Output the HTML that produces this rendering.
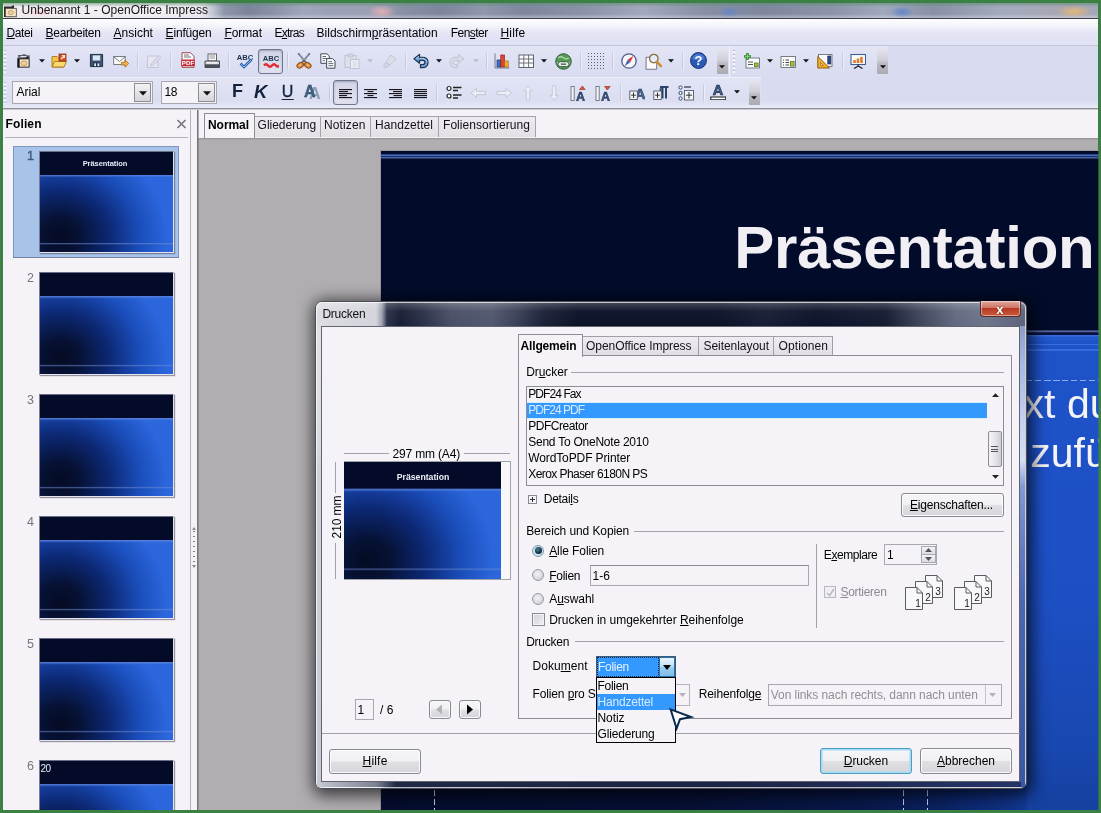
<!DOCTYPE html>
<html lang="de">
<head>
<meta charset="utf-8">
<title>Unbenannt 1 - OpenOffice Impress</title>
<style>
*{box-sizing:border-box;margin:0;padding:0}
html,body{width:1101px;height:813px;overflow:hidden}
body{background:#3b8143;font-family:"Liberation Sans",sans-serif;font-size:12px;color:#000;position:relative}
#win{position:absolute;left:0;top:0;width:1101px;height:813px;overflow:hidden;will-change:transform}
#win div,#win span,#win svg{position:absolute}
#win u{text-decoration:underline;text-underline-offset:.6px;text-decoration-thickness:1px}
span.t{white-space:pre;display:block}
</style>
</head>
<body>
<div id="win">
<div style="left:3px;top:3px;width:1095px;height:15px;background:linear-gradient(90deg,#f0edf1 0,#f3eff3 150px,#eae8ee 198px,#c0c4d2 210px,#8e96ac 221px,#7c849c 245px,#8a92a8 270px,#a0a7bc 300px,#9aa1b7 330px,#9c9fb4 378px,#8890a6 400px,#7e869e 440px,#8f97ad 480px,#7f879f 520px,#8a92a8 580px,#a2a9be 640px,#8890a6 700px,#7f879f 760px,#8c94aa 830px,#a0a8be 880px,#8890a6 930px,#a4abbf 1000px,#a9a6b4 1060px,#a3a8b8 1095px)"></div>
<div style="left:3px;top:3px;width:1095px;height:4px;background:linear-gradient(rgba(90,140,110,.6),rgba(150,170,180,0))"></div>
<div style="left:3px;top:14px;width:1095px;height:4px;background:linear-gradient(rgba(255,255,255,0),rgba(230,232,240,.45))"></div>
<div style="left:1056px;top:5px;width:36px;height:13px;background:radial-gradient(ellipse at center,rgba(236,186,110,.85),rgba(236,190,120,0) 70%)"></div>
<div style="left:368px;top:5px;width:28px;height:13px;background:radial-gradient(ellipse at center,rgba(245,180,180,.8),rgba(240,190,190,0) 70%)"></div>
<div style="left:25px;top:7px;width:30px;height:11px;background:radial-gradient(ellipse at center,rgba(250,200,200,.55),rgba(240,190,190,0) 70%)"></div>
<div style="left:718px;top:6px;width:22px;height:12px;background:radial-gradient(ellipse at center,rgba(90,130,205,.7),rgba(90,130,205,0) 70%)"></div>
<div style="left:890px;top:6px;width:24px;height:12px;background:radial-gradient(ellipse at center,rgba(80,125,210,.75),rgba(90,130,205,0) 70%)"></div>
<div style="left:3px;top:18px;width:1095px;height:1px;background:#3c3d48"></div>
<span class="t" style="left:21.60px;top:2.84px;font-size:12px;line-height:14px;color:#1a1418;letter-spacing:0.016px;">Unbenannt 1 - OpenOffice Impress</span>
<div style="left:3px;top:19px;width:1095px;height:27px;background:linear-gradient(#fdfdfe 0,#f6f6fb 6px,#e9eaf7 11px,#e2e4f5 16px,#e0e2f4 27px)"></div>
<span class="t" style="left:6.40px;top:26.24px;font-size:12px;line-height:14px;color:#000;letter-spacing:-0.363px;"><u>D</u>atei</span>
<span class="t" style="left:45.60px;top:26.24px;font-size:12px;line-height:14px;color:#000;letter-spacing:-0.305px;"><u>B</u>earbeiten</span>
<span class="t" style="left:113.40px;top:26.24px;font-size:12px;line-height:14px;color:#000;letter-spacing:0.034px;"><u>A</u>nsicht</span>
<span class="t" style="left:165.60px;top:26.24px;font-size:12px;line-height:14px;color:#000;letter-spacing:-0.172px;"><u>E</u>infügen</span>
<span class="t" style="left:224.40px;top:26.24px;font-size:12px;line-height:14px;color:#000;letter-spacing:-0.069px;"><u>F</u>ormat</span>
<span class="t" style="left:274.50px;top:26.24px;font-size:12px;line-height:14px;color:#000;letter-spacing:-0.753px;">E<u>x</u>tras</span>
<span class="t" style="left:316.60px;top:26.24px;font-size:12px;line-height:14px;color:#000;letter-spacing:-0.018px;">Bildschirm<u>p</u>räsentation</span>
<span class="t" style="left:450.70px;top:26.24px;font-size:12px;line-height:14px;color:#000;letter-spacing:-0.527px;">Fen<u>s</u>ter</span>
<span class="t" style="left:500.40px;top:26.24px;font-size:12px;line-height:14px;color:#000;letter-spacing:0.197px;"><u>H</u>ilfe</span>
<div style="left:3px;top:45px;width:1095px;height:64px;background:#d9dcf0"></div>
<div style="left:3px;top:45px;width:1095px;height:1px;background:#c3c6d8"></div>
<div style="left:3px;top:46px;width:885px;height:31px;background:linear-gradient(#e3e5f6,#dcdff2 60%,#d9dcf0)"></div>
<div style="left:3px;top:77px;width:758px;height:31px;background:linear-gradient(#e3e5f6,#dcdff2 60%,#d9dcf0)"></div>
<div style="left:3px;top:77px;width:758px;height:1px;background:#eceefa"></div>
<div style="left:3px;top:101px;width:1095px;height:7px;background:linear-gradient(rgba(236,237,248,0),rgba(236,237,248,.9))"></div>
<div style="left:3px;top:108px;width:1095px;height:1px;background:#8d8d96"></div>
<div style="left:3px;top:109px;width:1095px;height:1px;background:#cfcdd3"></div>
<div style="left:12px;top:81px;width:141px;height:23px;background:#f5f3f7;border:1px solid #a9a8b2"></div>
<div style="left:134px;top:83px;width:17px;height:19px;background:linear-gradient(#f2f1f4,#d6d5da);border:1px solid #8e8d96"></div>
<span class="t" style="left:16.40px;top:85.44px;font-size:12px;line-height:14px;color:#000;">Arial</span>
<div style="left:161px;top:81px;width:56px;height:23px;background:#f5f3f7;border:1px solid #a9a8b2"></div>
<div style="left:198px;top:83px;width:17px;height:19px;background:linear-gradient(#f2f1f4,#d6d5da);border:1px solid #8e8d96"></div>
<span class="t" style="left:164.40px;top:85.44px;font-size:12px;line-height:14px;color:#000;letter-spacing:-0.430px;">18</span>
<div style="left:3.7px;top:50px;width:2px;height:24px;background:repeating-linear-gradient(#b4b7cb 0,#b4b7cb 1.3px,rgba(250,250,255,.9) 1.3px,rgba(250,250,255,.9) 2.6px,rgba(0,0,0,0) 2.6px,rgba(0,0,0,0) 4px)"></div>
<div style="left:3.7px;top:82px;width:2px;height:22px;background:repeating-linear-gradient(#b4b7cb 0,#b4b7cb 1.3px,rgba(250,250,255,.9) 1.3px,rgba(250,250,255,.9) 2.6px,rgba(0,0,0,0) 2.6px,rgba(0,0,0,0) 4px)"></div>
<svg style="left:16px;top:52.5px;" width="16" height="16" viewBox="0 0 16 16"><path d="M1.5 4.5 H9 L13.5 2 V14.5 H1.5Z" fill="#2a2a2e"/><rect x="3" y="6" width="10" height="8" fill="#f3e3c8" stroke="#4a4036" stroke-width=".8"/><ellipse cx="8" cy="10.3" rx="3" ry="2.3" fill="#f1cf9a" stroke="#b98d52" stroke-width=".7"/><path d="M2 2.5 H10 M2 4 L8 1.5 L13 3.5" stroke="#5a5a62" stroke-width="1" fill="none"/><rect x="1.5" y="6" width="2" height="8.5" fill="#15151a"/></svg>
<svg style="left:38.5px;top:59.0px;" width="6" height="4" viewBox="0 0 6 4"><path d="M0 0.2 H6 L3 3.4Z" fill="#111"/></svg>
<svg style="left:51px;top:52.5px;" width="16" height="16" viewBox="0 0 16 16"><path d="M1 3.5 H6 L7.5 5 H13 V14 H1Z" fill="#f4c648" stroke="#a9751c" stroke-width=".9"/><path d="M1 14 L3.5 8.5 H15.5 L13 14Z" fill="#f9da6e" stroke="#a9751c" stroke-width=".9"/><rect x="8" y="1" width="7" height="7" fill="#d5532b" stroke="#8a2a12" stroke-width=".8"/><path d="M10 6 L13.5 2.5 M11 2.5 H13.5 V5" stroke="#ffe9c8" stroke-width="1.2" fill="none"/></svg>
<svg style="left:74.3px;top:59.0px;" width="6" height="4" viewBox="0 0 6 4"><path d="M0 0.2 H6 L3 3.4Z" fill="#111"/></svg>
<svg style="left:88.5px;top:53px;" width="15" height="15" viewBox="0 0 16 16"><path d="M1.5 1.5 H14.5 V14.5 H1.5Z" fill="#3d5573" stroke="#1d2c44" stroke-width="1"/><rect x="4" y="2.5" width="8" height="5.5" fill="#d9e6f4"/><rect x="4.5" y="10" width="7" height="4.5" fill="#1d2c44"/><rect x="5.5" y="11" width="2" height="3" fill="#d9e6f4"/><rect x="9" y="11" width="2" height="3" fill="#d9e6f4"/></svg>
<svg style="left:113px;top:53px;" width="16" height="16" viewBox="0 0 16 16"><rect x=".7" y="3.5" width="11.5" height="8" fill="#fbfbf6" stroke="#6b7080" stroke-width=".9"/><path d="M1 4 L6.5 8.5 L12 4" fill="none" stroke="#6b7080" stroke-width=".9"/><path d="M8.5 9.3 H12 V7 L15.7 10.6 L12 14.2 V12 H8.5Z" fill="#f3b24a" stroke="#a86514" stroke-width=".8"/></svg>
<div style="left:136.5px;top:50px;width:1px;height:22px;background:linear-gradient(rgba(170,174,196,0),#c6c9dc 25%,#c6c9dc 75%,rgba(170,174,196,0))"></div>
<div style="left:137.5px;top:50px;width:1px;height:22px;background:linear-gradient(rgba(255,255,255,0),rgba(240,241,250,.8) 25%,rgba(240,241,250,.8) 75%,rgba(255,255,255,0))"></div>
<svg style="left:146px;top:52.5px;" width="16" height="16" viewBox="0 0 16 16"><rect x="1.5" y="3" width="10.5" height="11.5" fill="#e6e7f2" stroke="#c3c5d6" stroke-width="1"/><path d="M5 11 L13 2.5 L15 4.5 L7 12.5 L4.5 13Z" fill="#dcdde9" stroke="#c0c2d3" stroke-width=".9"/></svg>
<div style="left:170px;top:50px;width:1px;height:22px;background:linear-gradient(rgba(170,174,196,0),#c6c9dc 25%,#c6c9dc 75%,rgba(170,174,196,0))"></div>
<div style="left:171px;top:50px;width:1px;height:22px;background:linear-gradient(rgba(255,255,255,0),rgba(240,241,250,.8) 25%,rgba(240,241,250,.8) 75%,rgba(255,255,255,0))"></div>
<svg style="left:180px;top:52px;" width="16" height="16" viewBox="0 0 16 16"><path d="M2 .7 H10.5 L14 4.2 V15.3 H2Z" fill="#fbfbfb" stroke="#8f3a3a" stroke-width=".9"/><path d="M4 3 H9 M4 5 H11" stroke="#777" stroke-width="1"/><rect x="1.2" y="7.5" width="13.6" height="6.8" rx="1" fill="#c62f3a"/><text x="8" y="13.3" text-anchor="middle" font-family="Liberation Sans,sans-serif" font-weight="bold" font-size="6.2" fill="#fff">PDF</text></svg>
<svg style="left:204px;top:52.5px;" width="16" height="16" viewBox="0 0 16 16"><rect x="4" y="1" width="8.5" height="7" fill="#fcfcfc" stroke="#555" stroke-width=".9"/><path d="M5.5 3 H11 M5.5 5 H11" stroke="#888" stroke-width=".9"/><path d="M1 8 H15.5 V14.5 H1Z" fill="#d8d9dc" stroke="#3a3c42" stroke-width=".9"/><rect x="1" y="11.3" width="14.5" height="3.2" fill="#4a4d55"/><rect x="3" y="9.3" width="10" height="1.2" fill="#f5f5f5"/></svg>
<div style="left:228px;top:50px;width:1px;height:22px;background:linear-gradient(rgba(170,174,196,0),#c6c9dc 25%,#c6c9dc 75%,rgba(170,174,196,0))"></div>
<div style="left:229px;top:50px;width:1px;height:22px;background:linear-gradient(rgba(255,255,255,0),rgba(240,241,250,.8) 25%,rgba(240,241,250,.8) 75%,rgba(255,255,255,0))"></div>
<svg style="left:237px;top:52.5px;" width="16" height="16" viewBox="0 0 16 16"><text x="8" y="7.3" text-anchor="middle" font-family="Liberation Sans,sans-serif" font-weight="bold" font-size="7.6" fill="#1f3350">ABC</text><path d="M3.5 10.5 L7 14 L14.5 6.5" fill="none" stroke="#2a5fae" stroke-width="2.6"/><path d="M3.5 10.5 L7 14 L14.5 6.5" fill="none" stroke="#8db8ee" stroke-width="1"/></svg>
<div style="left:258px;top:49px;width:25px;height:25px;border:1px solid #6f7890;border-radius:3px;background:linear-gradient(#d2d5e6,#dfe1f0);box-shadow:inset 0 1px 2px rgba(60,70,100,.35)"></div>
<svg style="left:262.5px;top:53px;" width="16" height="16" viewBox="0 0 16 16"><text x="8" y="8" text-anchor="middle" font-family="Liberation Sans,sans-serif" font-weight="bold" font-size="7.6" fill="#1f3350">ABC</text><path d="M1 12.5 Q3 10 5 12.5 T9 12.5 T13 12.5 T16 12" fill="none" stroke="#e3282e" stroke-width="2.3"/></svg>
<div style="left:287px;top:50px;width:1px;height:22px;background:linear-gradient(rgba(170,174,196,0),#c6c9dc 25%,#c6c9dc 75%,rgba(170,174,196,0))"></div>
<div style="left:288px;top:50px;width:1px;height:22px;background:linear-gradient(rgba(255,255,255,0),rgba(240,241,250,.8) 25%,rgba(240,241,250,.8) 75%,rgba(255,255,255,0))"></div>
<svg style="left:295.5px;top:52.5px;" width="16" height="16" viewBox="0 0 16 16"><path d="M2.6 .8 L11.2 11 M13.4 .8 L4.8 11" stroke="#56607a" stroke-width="1.7" fill="none" stroke-linecap="round"/><path d="M3.4 1.6 L8 7 M12.6 1.6 L8 7" stroke="#c9cfdc" stroke-width=".6" fill="none"/><ellipse cx="4.2" cy="12.2" rx="3.5" ry="2.5" transform="rotate(-32 4.2 12.2)" fill="#d98c3c" stroke="#8a4c12" stroke-width="1"/><ellipse cx="11.8" cy="12.2" rx="3.5" ry="2.5" transform="rotate(32 11.8 12.2)" fill="#d98c3c" stroke="#8a4c12" stroke-width="1"/><ellipse cx="4.2" cy="12.2" rx="1.3" ry=".8" transform="rotate(-32 4.2 12.2)" fill="#f3c58c"/><ellipse cx="11.8" cy="12.2" rx="1.3" ry=".8" transform="rotate(32 11.8 12.2)" fill="#f3c58c"/></svg>
<svg style="left:320px;top:52.5px;" width="16" height="16" viewBox="0 0 16 16"><path d="M.8 .8 H7 L9.3 3 V10.3 H.8Z" fill="#fcfcfd" stroke="#3f4a5c" stroke-width="1"/><path d="M2.5 3.5 H6 M2.5 5.5 H7.5 M2.5 7.7 H5" stroke="#3f4a5c" stroke-width=".8"/><path d="M6.6 5.6 H12.6 L15 7.9 V15.2 H6.6Z" fill="#fcfcfd" stroke="#3f4a5c" stroke-width="1"/><path d="M8.4 8.6 H12 M8.4 10.6 H13.3 M8.4 12.7 H13.3" stroke="#3f4a5c" stroke-width=".8"/></svg>
<svg style="left:344px;top:52.5px;" width="16" height="16" viewBox="0 0 16 16"><rect x="1" y="2.5" width="11" height="12" fill="#dfe0ec" stroke="#c0c2d3" stroke-width="1"/><rect x="4" y="1" width="5" height="3" fill="#d2d3e1" stroke="#c0c2d3" stroke-width=".8"/><rect x="6.5" y="6.5" width="8.5" height="9" fill="#eceef6" stroke="#c0c2d3" stroke-width="1"/><path d="M8.5 9 H13 M8.5 11 H13 M8.5 13 H13" stroke="#cfd1df" stroke-width=".9"/></svg>
<svg style="left:367px;top:59.0px;" width="6" height="4" viewBox="0 0 6 4"><path d="M0 0.2 H6 L3 3.4Z" fill="#b9bbcc"/></svg>
<svg style="left:382px;top:52.5px;" width="16" height="16" viewBox="0 0 16 16"><path d="M9 2 L14 6 L8 12 L4 9Z" fill="#dcdde9" stroke="#c3c5d6" stroke-width="1"/><path d="M4 9 L7.5 12.5 L3 15 L1.5 13Z" fill="#d3d4e2" stroke="#c3c5d6" stroke-width="1"/></svg>
<div style="left:405px;top:50px;width:1px;height:22px;background:linear-gradient(rgba(170,174,196,0),#c6c9dc 25%,#c6c9dc 75%,rgba(170,174,196,0))"></div>
<div style="left:406px;top:50px;width:1px;height:22px;background:linear-gradient(rgba(255,255,255,0),rgba(240,241,250,.8) 25%,rgba(240,241,250,.8) 75%,rgba(255,255,255,0))"></div>
<svg style="left:413px;top:52.5px;" width="16" height="16" viewBox="0 0 16 16"><path d="M6.5 1.5 V4.3 H9.5 C13 4.3 15 6.6 15 9.5 C15 12.6 12.8 14.7 9.5 14.7 H7.5 V11.6 H9.5 C11 11.6 12 10.8 12 9.5 C12 8.2 11 7.4 9.5 7.4 H6.5 V10.2 L1 5.8Z" fill="#7aa3d6" stroke="#1c3558" stroke-width="1.3" stroke-linejoin="round"/><path d="M6 3.2 L2.6 5.8 M7 5.3 H10 C12.5 5.3 14 7.3 14 9.5" stroke="#b9d4f4" stroke-width=".8" fill="none"/></svg>
<svg style="left:436.4px;top:59.0px;" width="6" height="4" viewBox="0 0 6 4"><path d="M0 0.2 H6 L3 3.4Z" fill="#111"/></svg>
<svg style="left:449px;top:52.5px;" width="16" height="16" viewBox="0 0 16 16"><path d="M9.5 1.5 V4.3 H6.5 C3 4.3 1 6.6 1 9.5 C1 12.6 3.2 14.7 6.5 14.7 H8.5 V11.6 H6.5 C5 11.6 4 10.8 4 9.5 C4 8.2 5 7.4 6.5 7.4 H9.5 V10.2 L15 5.8Z" fill="#dadbe8" stroke="#c0c2d3" stroke-width="1" stroke-linejoin="round"/></svg>
<svg style="left:472.6px;top:59.0px;" width="6" height="4" viewBox="0 0 6 4"><path d="M0 0.2 H6 L3 3.4Z" fill="#b9bbcc"/></svg>
<div style="left:485.5px;top:50px;width:1px;height:22px;background:linear-gradient(rgba(170,174,196,0),#c6c9dc 25%,#c6c9dc 75%,rgba(170,174,196,0))"></div>
<div style="left:486.5px;top:50px;width:1px;height:22px;background:linear-gradient(rgba(255,255,255,0),rgba(240,241,250,.8) 25%,rgba(240,241,250,.8) 75%,rgba(255,255,255,0))"></div>
<svg style="left:494px;top:52.5px;" width="16" height="16" viewBox="0 0 16 16"><path d="M1 .5 V15 H15.5" fill="none" stroke="#6e7a96" stroke-width="1"/><rect x="3" y="7" width="3.6" height="7" fill="#3d6fc4" stroke="#1d3a78" stroke-width=".7"/><rect x="6.8" y="2" width="3.6" height="12" fill="#e2452f" stroke="#8a1f12" stroke-width=".7"/><rect x="10.6" y="8" width="3.6" height="6" fill="#f3a93a" stroke="#a5660f" stroke-width=".7"/></svg>
<svg style="left:518px;top:52.5px;" width="16" height="16" viewBox="0 0 16 16"><rect x="1" y="2" width="14.5" height="12.5" fill="#fcfcfc" stroke="#62646e" stroke-width="1"/><path d="M1 6 H15.5 M1 10 H15.5 M5.8 2 V14.5 M10.6 2 V14.5" stroke="#62646e" stroke-width=".9"/></svg>
<svg style="left:541.4px;top:59.0px;" width="6" height="4" viewBox="0 0 6 4"><path d="M0 0.2 H6 L3 3.4Z" fill="#111"/></svg>
<svg style="left:555px;top:52.5px;" width="17" height="17" viewBox="0 0 16 16"><circle cx="8" cy="8" r="7.3" fill="#5a9a58" stroke="#2d5a34" stroke-width=".9"/><path d="M3 4.5 Q5.5 2.5 8 4.5 T13 4.5 M2 9 Q4 11 6 9 M10 9 Q12 11 14 9" stroke="#a9d6a0" stroke-width="1.4" fill="none"/><rect x="2.8" y="8.2" width="10.4" height="4.6" rx="2.3" fill="#e9f1ea" stroke="#3c5a48" stroke-width=".9"/><path d="M5.5 10.5 H10.5" stroke="#3c5a48" stroke-width="1.2"/></svg>
<div style="left:580px;top:50px;width:1px;height:22px;background:linear-gradient(rgba(170,174,196,0),#c6c9dc 25%,#c6c9dc 75%,rgba(170,174,196,0))"></div>
<div style="left:581px;top:50px;width:1px;height:22px;background:linear-gradient(rgba(255,255,255,0),rgba(240,241,250,.8) 25%,rgba(240,241,250,.8) 75%,rgba(255,255,255,0))"></div>
<div style="left:587px;top:52px;width:18px;height:18px;background-image:radial-gradient(circle,#5d5f6c .65px,rgba(0,0,0,0) .95px);background-size:3px 3px"></div>
<div style="left:612px;top:50px;width:1px;height:22px;background:linear-gradient(rgba(170,174,196,0),#c6c9dc 25%,#c6c9dc 75%,rgba(170,174,196,0))"></div>
<div style="left:613px;top:50px;width:1px;height:22px;background:linear-gradient(rgba(255,255,255,0),rgba(240,241,250,.8) 25%,rgba(240,241,250,.8) 75%,rgba(255,255,255,0))"></div>
<svg style="left:621px;top:52.5px;" width="16" height="16" viewBox="0 0 16 16"><circle cx="8" cy="8" r="7.2" fill="#f6f6fb" stroke="#4d5c8a" stroke-width="1.3"/><path d="M12.5 2.8 L9.3 9.3 L6.7 6.7Z" fill="#e0332b"/><path d="M3.5 13.2 L9.3 9.3 L6.7 6.7Z" fill="#3b62b4"/></svg>
<svg style="left:645px;top:52.5px;" width="17" height="17" viewBox="0 0 16 16"><path d="M1 4 H8 L11 7 V15.3 H1Z" fill="#fbfbfb" stroke="#6b6f7c" stroke-width=".9"/><circle cx="8.3" cy="5.2" r="4" fill="#e4f0fb" fill-opacity=".9" stroke="#8a6a3a" stroke-width="1.2"/><path d="M11.3 8.3 L15 12.3" stroke="#d08a2a" stroke-width="2.3" stroke-linecap="round"/></svg>
<svg style="left:668.4px;top:59.0px;" width="6" height="4" viewBox="0 0 6 4"><path d="M0 0.2 H6 L3 3.4Z" fill="#111"/></svg>
<div style="left:681.5px;top:50px;width:1px;height:22px;background:linear-gradient(rgba(170,174,196,0),#c6c9dc 25%,#c6c9dc 75%,rgba(170,174,196,0))"></div>
<div style="left:682.5px;top:50px;width:1px;height:22px;background:linear-gradient(rgba(255,255,255,0),rgba(240,241,250,.8) 25%,rgba(240,241,250,.8) 75%,rgba(255,255,255,0))"></div>
<svg style="left:689.5px;top:52.3px;" width="17" height="17" viewBox="0 0 17 17"><circle cx="8.5" cy="8.5" r="8" fill="#2b58b4" stroke="#16306e" stroke-width=".9"/><path d="M2.2 7 A6.5 6.5 0 0 1 14.8 7 Q8.5 9.5 2.2 7Z" fill="#5a88dc" fill-opacity=".7"/><text x="8.5" y="13.2" text-anchor="middle" font-family="Liberation Sans,sans-serif" font-weight="bold" font-size="13" fill="#fff">?</text></svg>
<div style="left:716.5px;top:48px;width:11px;height:26px;background:linear-gradient(#e4e5ee 0,#cfd0d8 45%,#b9bac2 60%,#a9aab2 100%);border-radius:1px"></div>
<svg style="left:719.0px;top:65px;" width="6" height="4" viewBox="0 0 6 4"><path d="M0 0.3 H6 L3 3.6Z" fill="#111"/></svg>
<div style="left:728.5px;top:46px;width:1px;height:31px;background:#eef0fb"></div>
<div style="left:733px;top:50px;width:2px;height:24px;background:repeating-linear-gradient(#b4b7cb 0,#b4b7cb 1.3px,rgba(250,250,255,.9) 1.3px,rgba(250,250,255,.9) 2.6px,rgba(0,0,0,0) 2.6px,rgba(0,0,0,0) 4px)"></div>
<svg style="left:744px;top:52.5px;" width="16" height="16" viewBox="0 0 16 16"><rect x="2" y="5" width="13.5" height="10" fill="#fbfbfb" stroke="#6b6f7c" stroke-width=".9"/><path d="M4 9 H9 M4 11.5 H9" stroke="#555" stroke-width="1"/><rect x="10.5" y="10" width="3.6" height="3.6" fill="#9fc04a" stroke="#5a7a1c" stroke-width=".8"/><path d="M3.5 0 V7 M0 3.5 H7" stroke="#2f8a2a" stroke-width="2.6"/><path d="M3.5 .8 V6.2 M.8 3.5 H6.2" stroke="#8fd47a" stroke-width=".9"/></svg>
<svg style="left:767.4px;top:59.0px;" width="6" height="4" viewBox="0 0 6 4"><path d="M0 0.2 H6 L3 3.4Z" fill="#111"/></svg>
<svg style="left:780.4px;top:52.5px;" width="16" height="16" viewBox="0 0 16 16"><rect x="1" y="3.5" width="14.5" height="11" fill="#fbfbfb" stroke="#6b6f7c" stroke-width=".9"/><path d="M3 7 H4 M5.5 7 H9 M3 9.5 H4 M5.5 9.5 H9 M3 12 H4 M5.5 12 H9" stroke="#444" stroke-width="1"/><rect x="10.5" y="8.5" width="3.6" height="4.6" fill="#9fc04a" stroke="#5a7a1c" stroke-width=".8"/></svg>
<svg style="left:803.4px;top:59.0px;" width="6" height="4" viewBox="0 0 6 4"><path d="M0 0.2 H6 L3 3.4Z" fill="#111"/></svg>
<svg style="left:817px;top:52.5px;" width="16" height="16" viewBox="0 0 16 16"><rect x="1.5" y="1.5" width="13.5" height="12" fill="#fbfbfb" stroke="#6b6f7c" stroke-width=".9"/><path d="M.8 3.5 L12.5 15 H.8Z" fill="#f2b02e" stroke="#8a5a0c" stroke-width="1"/><path d="M3.5 9.5 L6.5 12.5 H3.5Z" fill="#fbe6a6" stroke="#8a5a0c" stroke-width=".6"/><rect x="10.8" y="3" width="3" height="8" fill="#2d4d8a" stroke="#16284e" stroke-width=".7"/></svg>
<div style="left:841.5px;top:50px;width:1px;height:22px;background:linear-gradient(rgba(170,174,196,0),#c6c9dc 25%,#c6c9dc 75%,rgba(170,174,196,0))"></div>
<div style="left:842.5px;top:50px;width:1px;height:22px;background:linear-gradient(rgba(255,255,255,0),rgba(240,241,250,.8) 25%,rgba(240,241,250,.8) 75%,rgba(255,255,255,0))"></div>
<svg style="left:850px;top:52.5px;" width="16" height="16" viewBox="0 0 16 16"><rect x="1" y="1.5" width="14.5" height="10" fill="#fbfbfb" stroke="#3f5f9a" stroke-width="1.1"/><rect x="3.2" y="7" width="2.6" height="3" fill="#e07a2a"/><rect x="6.7" y="5.5" width="2.6" height="4.5" fill="#e07a2a"/><rect x="10.2" y="3.8" width="2.6" height="6.2" fill="#e07a2a"/><path d="M8.2 11.5 V13 M8.2 13 L4 15.6 M8.2 13 L12.5 15.6" stroke="#2a2a30" stroke-width="1.3" fill="none"/></svg>
<div style="left:877px;top:48px;width:11px;height:26px;background:linear-gradient(#e4e5ee 0,#cfd0d8 45%,#b9bac2 60%,#a9aab2 100%);border-radius:1px"></div>
<svg style="left:879.5px;top:65px;" width="6" height="4" viewBox="0 0 6 4"><path d="M0 0.3 H6 L3 3.6Z" fill="#111"/></svg>
<span class="t" style="left:232.00px;top:81.26px;font-size:18px;line-height:21px;color:#14213d;font-weight:bold;letter-spacing:-1.700px;">F</span>
<span class="t" style="left:254.00px;top:80.59px;font-size:18.5px;line-height:22px;color:#14213d;font-weight:bold;font-style:italic;letter-spacing:2.625px;">K</span>
<span class="t" style="left:281.70px;top:81.96px;font-size:16px;line-height:19px;color:#14213d;letter-spacing:0.438px;-webkit-text-stroke:.35px #14213d;text-decoration:underline;text-underline-offset:1.5px;text-decoration-thickness:1.2px;">U</span>
<span class="t" style="left:309.00px;top:84.46px;font-size:16px;line-height:19px;color:#8d9cb5;font-weight:bold;letter-spacing:-0.562px;">A</span>
<span class="t" style="left:304.00px;top:82.46px;font-size:16px;line-height:19px;color:#3f6487;font-weight:bold;letter-spacing:-0.562px;-webkit-text-stroke:.4px #1e3650;">A</span>
<div style="left:329px;top:82px;width:1px;height:22px;background:linear-gradient(rgba(170,174,196,0),#c6c9dc 25%,#c6c9dc 75%,rgba(170,174,196,0))"></div>
<div style="left:330px;top:82px;width:1px;height:22px;background:linear-gradient(rgba(255,255,255,0),rgba(240,241,250,.8) 25%,rgba(240,241,250,.8) 75%,rgba(255,255,255,0))"></div>
<div style="left:333px;top:80px;width:25px;height:25px;border:1px solid #6f7890;border-radius:3px;background:linear-gradient(#d2d5e6,#dfe1f0);box-shadow:inset 0 1px 2px rgba(60,70,100,.35)"></div>
<svg style="left:338px;top:85.5px;" width="16" height="16" viewBox="0 0 16 16"><rect x="1" y="3" width="13" height="1.15" fill="#16161c"/><rect x="1" y="5" width="9" height="1.15" fill="#16161c"/><rect x="1" y="7" width="13" height="1.15" fill="#16161c"/><rect x="1" y="9" width="8" height="1.15" fill="#16161c"/><rect x="1" y="11" width="13" height="1.15" fill="#16161c"/></svg>
<svg style="left:362.5px;top:85.5px;" width="16" height="16" viewBox="0 0 16 16"><rect x="1" y="3" width="13" height="1.15" fill="#16161c"/><rect x="4.5" y="5" width="6.0" height="1.15" fill="#16161c"/><rect x="1" y="7" width="13" height="1.15" fill="#16161c"/><rect x="4.5" y="9" width="6.0" height="1.15" fill="#16161c"/><rect x="1" y="11" width="13" height="1.15" fill="#16161c"/></svg>
<svg style="left:387.5px;top:85.5px;" width="16" height="16" viewBox="0 0 16 16"><rect x="1" y="3" width="13" height="1.15" fill="#16161c"/><rect x="5" y="5" width="9" height="1.15" fill="#16161c"/><rect x="1" y="7" width="13" height="1.15" fill="#16161c"/><rect x="5.5" y="9" width="8.5" height="1.15" fill="#16161c"/><rect x="1" y="11" width="13" height="1.15" fill="#16161c"/></svg>
<svg style="left:412.5px;top:85.5px;" width="16" height="16" viewBox="0 0 16 16"><rect x="1" y="3" width="13" height="1.15" fill="#16161c"/><rect x="1" y="5" width="13" height="1.15" fill="#16161c"/><rect x="1" y="7" width="13" height="1.15" fill="#16161c"/><rect x="1" y="9" width="13" height="1.15" fill="#16161c"/><rect x="1" y="11" width="13" height="1.15" fill="#16161c"/></svg>
<div style="left:436px;top:82px;width:1px;height:22px;background:linear-gradient(rgba(170,174,196,0),#c6c9dc 25%,#c6c9dc 75%,rgba(170,174,196,0))"></div>
<div style="left:437px;top:82px;width:1px;height:22px;background:linear-gradient(rgba(255,255,255,0),rgba(240,241,250,.8) 25%,rgba(240,241,250,.8) 75%,rgba(255,255,255,0))"></div>
<svg style="left:445.5px;top:85px;" width="16" height="16" viewBox="0 0 16 16"><circle cx="3" cy="3.5" r="2" fill="#fff" stroke="#222" stroke-width="1.2"/><circle cx="3" cy="11" r="2" fill="#fff" stroke="#222" stroke-width="1.2"/><path d="M7 2.5 H15.5 M7 5.5 H12 M7 10 H15.5 M7 13 H12" stroke="#222" stroke-width="1.4"/></svg>
<svg style="left:470px;top:84.5px;" width="16" height="16" viewBox="0 0 16 16"><path d="M1 8 L6.5 3.5 V6.3 H15.5 V9.7 H6.5 V12.5Z" fill="#eceef6" stroke="#c3c5d6" stroke-width="1"/></svg>
<svg style="left:495.5px;top:84.5px;" width="16" height="16" viewBox="0 0 16 16"><path d="M15.5 8 L10 3.5 V6.3 H1 V9.7 H10 V12.5Z" fill="#eceef6" stroke="#c3c5d6" stroke-width="1"/></svg>
<svg style="left:520px;top:84.5px;" width="16" height="16" viewBox="0 0 16 16"><path d="M8 .8 L12 5.5 H9.7 V15 H6.3 V5.5 H4Z" fill="#eceef6" stroke="#c8cada" stroke-width="1"/></svg>
<svg style="left:545.5px;top:84.5px;" width="16" height="16" viewBox="0 0 16 16"><path d="M8 15.2 L12 10.5 H9.7 V1 H6.3 V10.5 H4Z" fill="#eceef6" stroke="#c8cada" stroke-width="1"/></svg>
<svg style="left:570px;top:84.5px;" width="16" height="16" viewBox="0 0 16 16"><rect x="1" y="1.5" width="3.2" height="14" fill="#f2f2f6" stroke="#6e7280" stroke-width=".9"/><text x="10.5" y="15.5" text-anchor="middle" font-family="Liberation Sans,sans-serif" font-weight="bold" font-size="12.5" fill="#3b5a84" stroke="#1c2c48" stroke-width=".5">A</text><path d="M9.5 4.5 L12.3 1 L15.2 4.5Z" fill="#e0553a" stroke="#8a2a18" stroke-width=".6"/></svg>
<svg style="left:595px;top:84.5px;" width="16" height="16" viewBox="0 0 16 16"><rect x="1" y="1.5" width="3.2" height="14" fill="#f2f2f6" stroke="#6e7280" stroke-width=".9"/><text x="10.5" y="15.5" text-anchor="middle" font-family="Liberation Sans,sans-serif" font-weight="bold" font-size="12.5" fill="#3b5a84" stroke="#1c2c48" stroke-width=".5">A</text><path d="M9.5 1.5 L12.3 5 L15.2 1.5Z" fill="#e0553a" stroke="#8a2a18" stroke-width=".6"/></svg>
<div style="left:620px;top:82px;width:1px;height:22px;background:linear-gradient(rgba(170,174,196,0),#c6c9dc 25%,#c6c9dc 75%,rgba(170,174,196,0))"></div>
<div style="left:621px;top:82px;width:1px;height:22px;background:linear-gradient(rgba(255,255,255,0),rgba(240,241,250,.8) 25%,rgba(240,241,250,.8) 75%,rgba(255,255,255,0))"></div>
<svg style="left:628.5px;top:84.5px;" width="16" height="16" viewBox="0 0 16 16"><text x="11.2" y="13.5" text-anchor="middle" font-family="Liberation Sans,sans-serif" font-weight="bold" font-size="15" fill="#46678f" stroke="#1c2c48" stroke-width=".5">A</text><rect x=".8" y="6" width="7.5" height="8.5" fill="#f4f4f8" stroke="#555a68" stroke-width=".9"/><path d="M4.5 7.5 V13 M2.2 10.2 H6.8" stroke="#333" stroke-width="1"/></svg>
<svg style="left:653px;top:84.5px;" width="16" height="16" viewBox="0 0 16 16"><path d="M7 2 H15.5 M9.5 2 V13.5 M13 2 V13.5" stroke="#2d4468" stroke-width="2" fill="none"/><path d="M9.5 2 C6 2 6 7.5 9.5 7.5Z" fill="#46678f" stroke="#1c2c48" stroke-width=".6"/><rect x=".8" y="6" width="7.5" height="8.5" fill="#f4f4f8" stroke="#555a68" stroke-width=".9"/><path d="M4.5 7.5 V13 M2.2 10.2 H6.8" stroke="#333" stroke-width="1"/></svg>
<svg style="left:678px;top:84.5px;" width="16" height="16" viewBox="0 0 16 16"><circle cx="2.5" cy="2.5" r="1.6" fill="#fff" stroke="#2d4468" stroke-width="1"/><circle cx="2.5" cy="8" r="1.6" fill="#fff" stroke="#2d4468" stroke-width="1"/><circle cx="2.5" cy="13.5" r="1.6" fill="#fff" stroke="#2d4468" stroke-width="1"/><path d="M6 2 H13" stroke="#333" stroke-width="1.2"/><rect x="6.5" y="5.5" width="9" height="9.5" fill="#f4f4f8" stroke="#555a68" stroke-width=".9"/><path d="M11 7 V13.5 M8 10.2 H14" stroke="#333" stroke-width="1"/></svg>
<div style="left:703px;top:82px;width:1px;height:22px;background:linear-gradient(rgba(170,174,196,0),#c6c9dc 25%,#c6c9dc 75%,rgba(170,174,196,0))"></div>
<div style="left:704px;top:82px;width:1px;height:22px;background:linear-gradient(rgba(255,255,255,0),rgba(240,241,250,.8) 25%,rgba(240,241,250,.8) 75%,rgba(255,255,255,0))"></div>
<svg style="left:710px;top:84px;" width="16" height="16" viewBox="0 0 16 16"><text x="8" y="11.2" text-anchor="middle" font-family="Liberation Sans,sans-serif" font-weight="bold" font-size="14.5" fill="#46678f" stroke="#16284a" stroke-width=".7">A</text><rect x=".8" y="13" width="15" height="2.8" fill="#fdfdfd" stroke="#16161c" stroke-width="1"/></svg>
<svg style="left:733.6px;top:90.0px;" width="6" height="4" viewBox="0 0 6 4"><path d="M0 0.2 H6 L3 3.4Z" fill="#111"/></svg>
<div style="left:748.5px;top:80px;width:11.5px;height:25px;background:linear-gradient(#e4e5ee 0,#cfd0d8 45%,#b9bac2 60%,#a9aab2 100%);border-radius:1px"></div>
<svg style="left:751.0px;top:96px;" width="6" height="4" viewBox="0 0 6 4"><path d="M0 0.3 H6 L3 3.6Z" fill="#111"/></svg>
<svg style="left:138.5px;top:91px;" width="8" height="5" viewBox="0 0 8 5"><path d="M0 0.2 H8 L4 4.4Z" fill="#111"/></svg>
<svg style="left:202.5px;top:91px;" width="8" height="5" viewBox="0 0 8 5"><path d="M0 0.2 H8 L4 4.4Z" fill="#111"/></svg>
<svg style="left:2.6px;top:3.6px;" width="15" height="14" viewBox="0 0 15 14"><path d="M1 2.5 H8 L11 1 V13 H1Z" fill="#2a2a2e"/><rect x="2.3" y="4.3" width="11" height="8.5" fill="#f3e3c8" stroke="#4a4036" stroke-width=".8"/><ellipse cx="7.8" cy="8.6" rx="2.7" ry="2" fill="#f1cf9a" stroke="#b98d52" stroke-width=".7"/></svg>
<div style="left:3px;top:110px;width:187px;height:703px;background:#f5f3f7"></div>
<div style="left:190px;top:110px;width:1px;height:703px;background:#b4b2ba"></div>
<div style="left:191px;top:110px;width:7px;height:703px;background:#f5f3f7"></div>
<span class="t" style="left:5.60px;top:116.84px;font-size:12px;line-height:14px;color:#000;font-weight:bold;letter-spacing:0.109px;">Folien</span>
<svg style="left:176px;top:119px" width="11" height="10" viewBox="0 0 11 10"><path d="M1.5 1 L9.5 9 M9.5 1 L1.5 9" stroke="#77757c" stroke-width="1.7" fill="none"/></svg>
<div style="left:5px;top:137px;width:183px;height:1px;background:#b4b2b9"></div>
<div style="left:13px;top:146px;width:166px;height:112px;background:#a7c3e9;border:1px solid #7d98bf;border-bottom-color:#6f83a3"></div>
<div style="left:39px;top:151px;width:135px;height:102px;border:1px solid;border-color:#6a6f86 #e4e5ee #e4e5ee #7a7e92;box-shadow:1px 1px 1px rgba(70,70,90,.55)"></div>
<div style="left:40px;top:152px;width:133px;height:100px;background:linear-gradient(#030b28 0,#030b28 22.5%,rgba(90,130,220,.9) 23%,rgba(0,0,0,0) 25.5%),linear-gradient(rgba(0,0,0,0) 90.5%,rgba(110,140,210,.55) 91.5%,rgba(0,0,0,0) 93%),radial-gradient(ellipse 80% 96% at 15% 84%,#050b24 0,#061133 18%,#0d2a78 48%,#1a4dba 75%,#2b66dc 100%);"></div>
<span class="t" style="left:27.00px;top:148.67px;font-size:12.5px;line-height:15px;color:#41597b;-webkit-text-stroke:.4px #41597b;">1</span>
<div style="left:39px;top:272px;width:135px;height:103px;border:1px solid;border-color:#6a6f86 #e4e5ee #e4e5ee #7a7e92;box-shadow:1px 1px 1px rgba(70,70,90,.55)"></div>
<div style="left:40px;top:273px;width:133px;height:101px;background:linear-gradient(#030b28 0,#030b28 22.5%,rgba(90,130,220,.9) 23%,rgba(0,0,0,0) 25.5%),linear-gradient(rgba(0,0,0,0) 90.5%,rgba(110,140,210,.55) 91.5%,rgba(0,0,0,0) 93%),radial-gradient(ellipse 80% 96% at 15% 84%,#050b24 0,#061133 18%,#0d2a78 48%,#1a4dba 75%,#2b66dc 100%);"></div>
<span class="t" style="left:27.00px;top:270.67px;font-size:12.5px;line-height:15px;color:#77757c;">2</span>
<div style="left:39px;top:394px;width:135px;height:103px;border:1px solid;border-color:#6a6f86 #e4e5ee #e4e5ee #7a7e92;box-shadow:1px 1px 1px rgba(70,70,90,.55)"></div>
<div style="left:40px;top:395px;width:133px;height:101px;background:linear-gradient(#030b28 0,#030b28 22.5%,rgba(90,130,220,.9) 23%,rgba(0,0,0,0) 25.5%),linear-gradient(rgba(0,0,0,0) 90.5%,rgba(110,140,210,.55) 91.5%,rgba(0,0,0,0) 93%),radial-gradient(ellipse 80% 96% at 15% 84%,#050b24 0,#061133 18%,#0d2a78 48%,#1a4dba 75%,#2b66dc 100%);"></div>
<span class="t" style="left:27.00px;top:392.67px;font-size:12.5px;line-height:15px;color:#77757c;">3</span>
<div style="left:39px;top:516px;width:135px;height:103px;border:1px solid;border-color:#6a6f86 #e4e5ee #e4e5ee #7a7e92;box-shadow:1px 1px 1px rgba(70,70,90,.55)"></div>
<div style="left:40px;top:517px;width:133px;height:101px;background:linear-gradient(#030b28 0,#030b28 22.5%,rgba(90,130,220,.9) 23%,rgba(0,0,0,0) 25.5%),linear-gradient(rgba(0,0,0,0) 90.5%,rgba(110,140,210,.55) 91.5%,rgba(0,0,0,0) 93%),radial-gradient(ellipse 80% 96% at 15% 84%,#050b24 0,#061133 18%,#0d2a78 48%,#1a4dba 75%,#2b66dc 100%);"></div>
<span class="t" style="left:27.00px;top:514.67px;font-size:12.5px;line-height:15px;color:#77757c;">4</span>
<div style="left:39px;top:638px;width:135px;height:103px;border:1px solid;border-color:#6a6f86 #e4e5ee #e4e5ee #7a7e92;box-shadow:1px 1px 1px rgba(70,70,90,.55)"></div>
<div style="left:40px;top:639px;width:133px;height:101px;background:linear-gradient(#030b28 0,#030b28 22.5%,rgba(90,130,220,.9) 23%,rgba(0,0,0,0) 25.5%),linear-gradient(rgba(0,0,0,0) 90.5%,rgba(110,140,210,.55) 91.5%,rgba(0,0,0,0) 93%),radial-gradient(ellipse 80% 96% at 15% 84%,#050b24 0,#061133 18%,#0d2a78 48%,#1a4dba 75%,#2b66dc 100%);"></div>
<span class="t" style="left:27.00px;top:636.67px;font-size:12.5px;line-height:15px;color:#77757c;">5</span>
<div style="left:39px;top:760px;width:135px;height:103px;border:1px solid;border-color:#6a6f86 #e4e5ee #e4e5ee #7a7e92;box-shadow:1px 1px 1px rgba(70,70,90,.55)"></div>
<div style="left:40px;top:761px;width:133px;height:101px;background:linear-gradient(#030b28 0,#030b28 22.5%,rgba(90,130,220,.9) 23%,rgba(0,0,0,0) 25.5%),linear-gradient(rgba(0,0,0,0) 90.5%,rgba(110,140,210,.55) 91.5%,rgba(0,0,0,0) 93%),radial-gradient(ellipse 80% 96% at 15% 84%,#050b24 0,#061133 18%,#0d2a78 48%,#1a4dba 75%,#2b66dc 100%);"></div>
<span class="t" style="left:27.00px;top:758.67px;font-size:12.5px;line-height:15px;color:#77757c;">6</span>
<span class="t" style="left:82.70px;top:158.90px;font-size:7.5px;line-height:9px;color:#e8ecf6;font-weight:bold;letter-spacing:-0.078px;">Präsentation</span>
<span class="t" style="left:40.50px;top:762.53px;font-size:10px;line-height:12px;color:#eef0f8;letter-spacing:-0.562px;">20</span>
<div style="left:193.3px;top:530.5px;width:1.6px;height:1.6px;background:#7d7b84"></div>
<div style="left:193.3px;top:535.5px;width:1.6px;height:1.6px;background:#7d7b84"></div>
<div style="left:193.3px;top:540.5px;width:1.6px;height:1.6px;background:#7d7b84"></div>
<div style="left:193.3px;top:545.5px;width:1.6px;height:1.6px;background:#7d7b84"></div>
<div style="left:193.3px;top:550.5px;width:1.6px;height:1.6px;background:#7d7b84"></div>
<div style="left:193.3px;top:555.5px;width:1.6px;height:1.6px;background:#7d7b84"></div>
<div style="left:193.3px;top:560.5px;width:1.6px;height:1.6px;background:#7d7b84"></div>
<svg style="left:192px;top:527px" width="4" height="3"><path d="M0 3 L2 0 L4 3Z" fill="#8a8890"/></svg>
<svg style="left:192px;top:565px" width="4" height="3"><path d="M0 0 L2 3 L4 0Z" fill="#8a8890"/></svg>
<div style="left:198px;top:110px;width:900px;height:28px;background:#f5f3f7"></div>
<div style="left:198px;top:138px;width:900px;height:675px;background:#b1aeb2"></div>
<div style="left:198px;top:138px;width:900px;height:2px;background:linear-gradient(#8f8d93,#b1aeb2)"></div>
<div style="left:197px;top:110px;width:2px;height:703px;background:linear-gradient(90deg,#77757b 0,#77757b 1px,rgba(119,117,123,.55) 1px,rgba(119,117,123,.55) 2px)"></div>
<div style="left:254.5px;top:116px;width:66.0px;height:21px;background:linear-gradient(#eeecf0,#e2e0e5);border:1px solid #a5a3aa;border-left:none;border-bottom:none"></div>
<span class="t" style="left:257.60px;top:118.34px;font-size:12px;line-height:14px;color:#141218;letter-spacing:-0.022px;">Gliederung</span>
<div style="left:320.5px;top:116px;width:50.5px;height:21px;background:linear-gradient(#eeecf0,#e2e0e5);border:1px solid #a5a3aa;border-left:none;border-bottom:none"></div>
<span class="t" style="left:324.00px;top:118.34px;font-size:12px;line-height:14px;color:#141218;letter-spacing:0.116px;">Notizen</span>
<div style="left:371px;top:116px;width:67.5px;height:21px;background:linear-gradient(#eeecf0,#e2e0e5);border:1px solid #a5a3aa;border-left:none;border-bottom:none"></div>
<span class="t" style="left:375.00px;top:118.34px;font-size:12px;line-height:14px;color:#141218;letter-spacing:0.062px;">Handzettel</span>
<div style="left:438.5px;top:116px;width:97.0px;height:21px;background:linear-gradient(#eeecf0,#e2e0e5);border:1px solid #a5a3aa;border-left:none;border-bottom:none"></div>
<span class="t" style="left:443.00px;top:118.34px;font-size:12px;line-height:14px;color:#141218;letter-spacing:0.060px;">Foliensortierung</span>
<div style="left:204px;top:113px;width:51px;height:25px;background:#f6f4f8;border:1px solid #8e8c94;border-bottom:none"></div>
<span class="t" style="left:208.00px;top:117.84px;font-size:12px;line-height:14px;color:#000;font-weight:bold;letter-spacing:-0.057px;">Normal</span>
<div style="left:380px;top:150px;width:720px;height:663px;background:#9a989e"></div>
<div style="left:381px;top:151px;width:720px;height:662px;background:#020c2a"></div>
<div style="left:381px;top:153.5px;width:720px;height:5px;background:linear-gradient(#0a1a4a 0,#4f7cc8 22%,#3a62b0 36%,#16286a 52%,#4a5f98 70%,#4a5f98 80%,#0a1434 100%)"></div>
<div style="left:381px;top:335px;width:720px;height:478px;background:linear-gradient(90deg,#0b2a7a 0,#0b2a7a 600px,#15409f 660px,#1d50c6 720px)"></div>
<div style="left:381px;top:329.5px;width:720px;height:6px;background:linear-gradient(#1a2450 0,#56669c 18%,#56669c 30%,#081240 45%,#050f3c 80%,#2a5acc 100%)"></div>
<div style="left:381px;top:335px;width:720px;height:56px;background:linear-gradient(#3f72de 0,#2258cf 2.5px,#1e52c9 8px,#1e52c9 56px)"></div>
<div style="left:1026px;top:391px;width:80px;height:422px;background:linear-gradient(#1e52c9 0,#1d4fc4 50%,#1947b0 85%,#15409f 100%)"></div>
<div style="left:381px;top:788px;width:646px;height:25px;background:linear-gradient(90deg,#050d2e 0,#061034 300px,#08184a 480px,#0b2262 560px,#0f3082 620px,#133a96 646px)"></div>
<span class="t" style="left:734.30px;top:213.21px;font-size:60px;line-height:70px;color:#f1eff4;font-weight:bold;letter-spacing:-0.270px;">Präsentation</span>
<div style="left:1026px;top:379.5px;width:75px;height:1.5px;background:repeating-linear-gradient(90deg,#86acf0 0,#86acf0 6.5px,rgba(0,0,0,0) 6.5px,rgba(0,0,0,0) 9px)"></div>
<div style="left:1026px;top:343.5px;width:75px;height:1.5px;background:#3b70e0"></div>
<div style="left:1026px;top:349px;width:75px;height:1.5px;background:#386bdc"></div>
<span class="t" style="left:980.30px;top:380.39px;font-size:41px;line-height:48px;color:#f4f3f8;clip-path:inset(0 0 0 46px);">Text durch Klicken</span>
<span class="t" style="left:975.50px;top:429.19px;font-size:41px;line-height:48px;color:#f4f3f8;clip-path:inset(0 0 0 52.5px);">hinzufügen</span>
<div style="left:434px;top:790px;width:1px;height:23px;background:repeating-linear-gradient(#c9d4ee 0,#c9d4ee 6px,rgba(0,0,0,0) 6px,rgba(0,0,0,0) 9px)"></div>
<div style="left:903px;top:790px;width:1px;height:23px;background:repeating-linear-gradient(#c9d4ee 0,#c9d4ee 6px,rgba(0,0,0,0) 6px,rgba(0,0,0,0) 9px)"></div>
<div style="left:927px;top:790px;width:1px;height:23px;background:repeating-linear-gradient(#c9d4ee 0,#c9d4ee 6px,rgba(0,0,0,0) 6px,rgba(0,0,0,0) 9px)"></div>
<div style="left:314.5px;top:300.5px;width:712.0px;height:488.0px;border-radius:7px;box-shadow:2px 3px 15px 4px rgba(0,0,0,.66)"></div>
<div style="left:314.5px;top:300.5px;width:712.0px;height:488.0px;border-radius:7px;border:1px solid #4a4c5a;background:linear-gradient(rgba(255,255,255,.25) 0,rgba(255,255,255,.04) 9px,rgba(255,255,255,0) 26px),linear-gradient(90deg,#dcdce2 0,#d3d4db 60px,#9a9eae 66px,#2a3048 71px,#161c34 85px,#2b3149 108px,#484e66 135px,#50566e 175px,#3a4058 200px,#1a2036 228px,#0a1026 262px,#0a1026 400px,#161c34 450px,#0b1128 500px,#141a30 570px,#3f465c 605px,#626980 640px,#6d748a 670px,#596078 712px);"></div>
<div style="left:315.5px;top:301.5px;width:710.0px;height:486.0px;border-radius:6px;border:1px solid rgba(255,255,255,.7)"></div>
<div style="left:316.5px;top:326px;width:4.5px;height:461px;background:linear-gradient(#e0e0e6 0,#dcdce3 22%,#cfd0d9 32%,#c6c8d3 100%)"></div>
<div style="left:1020px;top:326px;width:5px;height:461px;background:linear-gradient(#8e9cc4 0,#a6b8e4 8%,#c2cfee 20%,#d6dff4 29%,#8098d4 35%,#4a66b4 60%,#3a57a6 100%)"></div>
<div style="left:320.5px;top:782px;width:700px;height:5px;background:linear-gradient(90deg,#c1c3cd 0,#7d8294 55px,#202844 75px,#1c2446 400px,#243468 700px)"></div>
<div style="left:321px;top:326px;width:699px;height:456px;background:#f5f3f7;border:1px solid #62646f"></div>
<span class="t" style="left:322.40px;top:306.84px;font-size:12px;line-height:14px;color:#111;letter-spacing:-0.241px;">Drucken</span>
<div style="left:980px;top:301px;width:41px;height:16px;border:1px solid #5b2a25;border-top:none;border-radius:0 0 4px 4px;background:linear-gradient(#e0a99f 0,#cf7565 45%,#b93a25 50%,#c85a3c 100%);box-shadow:inset 0 0 0 1px rgba(255,255,255,.45)"></div>
<span class="t" style="left:996.30px;top:301.60px;font-size:13px;line-height:15px;color:#fff;font-weight:bold;letter-spacing:0.766px;text-shadow:0 0 2px #5a2018;">x</span>
<div style="left:344px;top:453px;width:45px;height:1px;background:#a3a1a8"></div>
<div style="left:464px;top:453px;width:46px;height:1px;background:#a3a1a8"></div>
<span class="t" style="left:392.50px;top:447.04px;font-size:12px;line-height:14px;color:#000;letter-spacing:-0.169px;">297 mm (A4)</span>
<div style="left:335px;top:462px;width:1px;height:31px;background:#a3a1a8"></div>
<div style="left:335px;top:543px;width:1px;height:36px;background:#a3a1a8"></div>
<span class="t" style="left:326px;top:509px;width:60px;height:14px;line-height:14px;text-align:center;transform-origin:0 0;transform:translate(3.5px,38px) rotate(-90deg);letter-spacing:-0.1px">210 mm</span>
<div style="left:344px;top:461px;width:167px;height:119px;background:#f8f7fa;border:1px solid #a3a1a8"></div>
<div style="left:344px;top:462px;width:157px;height:117px;background:linear-gradient(#030b28 0,#030b28 22.5%,rgba(90,130,220,.9) 23%,rgba(0,0,0,0) 25.5%),linear-gradient(rgba(0,0,0,0) 90.5%,rgba(110,140,210,.55) 91.5%,rgba(0,0,0,0) 93%),radial-gradient(ellipse 80% 96% at 15% 84%,#050b24 0,#061133 18%,#0d2a78 48%,#1a4dba 75%,#2b66dc 100%);"></div>
<span class="t" style="left:396.80px;top:471.99px;font-size:8.7px;line-height:10px;color:#eef0f8;font-weight:bold;letter-spacing:-0.010px;">Präsentation</span>
<div style="left:355px;top:699px;width:19px;height:21px;background:#f5f3f7;border:1px solid #a9a8b2"></div>
<span class="t" style="left:357.50px;top:702.64px;font-size:12px;line-height:14px;color:#000;">1</span>
<span class="t" style="left:380.00px;top:702.64px;font-size:12px;line-height:14px;color:#000;letter-spacing:0.052px;">/ 6</span>
<div style="left:429px;top:700px;width:22px;height:19px;border:1px solid #8a8890;border-radius:3px;background:linear-gradient(#f6f5f8 0,#f0eff3 48%,#e0dfe4 52%,#d6d5da 100%);box-shadow:inset 0 0 0 1px #fbfafc;"></div>
<div style="left:459px;top:700px;width:22px;height:19px;border:1px solid #8a8890;border-radius:3px;background:linear-gradient(#f6f5f8 0,#f0eff3 48%,#e0dfe4 52%,#d6d5da 100%);box-shadow:inset 0 0 0 1px #fbfafc;"></div>
<svg style="left:435px;top:704px" width="8" height="11"><path d="M7 0.5 L1 5.5 L7 10.5Z" fill="#b5b3ba"/></svg>
<svg style="left:466px;top:704px" width="8" height="11"><path d="M1 0.5 L7 5.5 L1 10.5Z" fill="#000"/></svg>
<div style="left:517.5px;top:355px;width:494px;height:364px;background:#f5f3f7;border:1px solid #8e8c94"></div>
<div style="left:582.5px;top:336px;width:116.5px;height:20px;background:linear-gradient(#efedf1,#e0dee3);border:1px solid #a09ea6;border-left:none;border-bottom:1px solid #8e8c94"></div>
<span class="t" style="left:586.00px;top:339.34px;font-size:12px;line-height:14px;color:#141218;letter-spacing:-0.056px;">OpenOffice Impress</span>
<div style="left:699px;top:336px;width:75px;height:20px;background:linear-gradient(#efedf1,#e0dee3);border:1px solid #a09ea6;border-left:none;border-bottom:1px solid #8e8c94"></div>
<span class="t" style="left:703.50px;top:339.34px;font-size:12px;line-height:14px;color:#141218;letter-spacing:-0.046px;">Seitenlayout</span>
<div style="left:774px;top:336px;width:58.5px;height:20px;background:linear-gradient(#efedf1,#e0dee3);border:1px solid #a09ea6;border-left:none;border-bottom:1px solid #8e8c94"></div>
<span class="t" style="left:778.50px;top:339.34px;font-size:12px;line-height:14px;color:#141218;letter-spacing:0.100px;">Optionen</span>
<div style="left:517.5px;top:333.5px;width:65.5px;height:23px;background:#f5f3f7;border:1px solid #8e8c94;border-bottom:none"></div>
<span class="t" style="left:520.50px;top:338.84px;font-size:12px;line-height:14px;color:#000;font-weight:bold;letter-spacing:-0.151px;">Allgemein</span>
<span class="t" style="left:526.20px;top:365.04px;font-size:12px;line-height:14px;color:#000;letter-spacing:-0.074px;">Dr<u>u</u>cker</span>
<div style="left:571px;top:371.5px;width:433px;height:1px;background:#a3a1a8"></div>
<div style="left:526px;top:385.5px;width:478px;height:100.5px;background:#f5f3f7;border:1px solid #8e8c94"></div>
<div style="left:527px;top:401.5px;width:459.5px;height:17px;background:#3399ff;border-top:1px solid #d6efff;border-bottom:1px solid #d6efff"></div>
<span class="t" style="left:528.20px;top:387.04px;font-size:12px;line-height:14px;color:#000;letter-spacing:-0.910px;">PDF24 Fax</span>
<span class="t" style="left:528.20px;top:403.04px;font-size:12px;line-height:14px;color:#d7ecff;letter-spacing:-0.965px;">PDF24 PDF</span>
<span class="t" style="left:528.20px;top:419.04px;font-size:12px;line-height:14px;color:#000;letter-spacing:-0.452px;">PDFCreator</span>
<span class="t" style="left:528.20px;top:435.04px;font-size:12px;line-height:14px;color:#000;letter-spacing:-0.236px;">Send To OneNote 2010</span>
<span class="t" style="left:528.20px;top:451.04px;font-size:12px;line-height:14px;color:#000;letter-spacing:-0.107px;">WordToPDF Printer</span>
<span class="t" style="left:528.20px;top:467.04px;font-size:12px;line-height:14px;color:#000;letter-spacing:-0.560px;">Xerox Phaser 6180N PS</span>
<svg style="left:992px;top:393px" width="7" height="4"><path d="M0 4 L3.5 0.3 L7 4Z" fill="#222"/></svg>
<svg style="left:992px;top:475px" width="7" height="4"><path d="M0 0 L3.5 3.7 L7 0Z" fill="#222"/></svg>
<div style="left:987.5px;top:431px;width:14px;height:36px;border:1px solid #8e8c94;border-radius:2px;background:linear-gradient(90deg,#f4f3f6,#e6e5e9 50%,#cfced4)"></div>
<div style="left:991px;top:446.0px;width:7px;height:1px;background:#55535a"></div>
<div style="left:991px;top:448.5px;width:7px;height:1px;background:#55535a"></div>
<div style="left:991px;top:451.0px;width:7px;height:1px;background:#55535a"></div>
<div style="left:528px;top:495px;width:9px;height:9px;background:#f5f3f7;border:1px solid #8a8890"></div>
<div style="left:530px;top:499px;width:5px;height:1px;background:#333"></div>
<div style="left:532px;top:497px;width:1px;height:5px;background:#333"></div>
<span class="t" style="left:543.80px;top:491.84px;font-size:12px;line-height:14px;color:#000;letter-spacing:-0.312px;">Detai<u>l</u>s</span>
<div style="left:901px;top:493px;width:102.5px;height:23.5px;border:1px solid #8a8890;border-radius:3px;background:linear-gradient(#f6f5f8 0,#f0eff3 48%,#e0dfe4 52%,#d6d5da 100%);box-shadow:inset 0 0 0 1px #fbfafc;"></div>
<span class="t" style="left:910.00px;top:498.34px;font-size:12px;line-height:14px;color:#000;letter-spacing:-0.191px;"><u>E</u>igenschaften...</span>
<span class="t" style="left:526.20px;top:523.84px;font-size:12px;line-height:14px;color:#000;letter-spacing:-0.097px;">Bereich und Kopien</span>
<div style="left:634px;top:530.5px;width:370px;height:1px;background:#a3a1a8"></div>
<div style="left:532px;top:544.7px;width:12px;height:12px;border-radius:50%;border:1px solid #7f9aa8;background:radial-gradient(circle at 50% 50%,#cfe9f3 0,#c4e2ee 60%,#e3f1f6 100%)"></div>
<div style="left:534.5px;top:547.2px;width:7px;height:7px;border-radius:50%;background:radial-gradient(circle at 40% 35%,#4d8198,#173744 55%,#0a1a24)"></div>
<span class="t" style="left:549.20px;top:544.34px;font-size:12px;line-height:14px;color:#000;letter-spacing:-0.094px;"><u>A</u>lle Folien</span>
<div style="left:532px;top:569px;width:12px;height:12px;border-radius:50%;border:1px solid #9a9aa2;background:radial-gradient(circle at 45% 40%,#f3f2f5 0,#dcdbdf 55%,#c4c3c9 100%)"></div>
<span class="t" style="left:549.20px;top:568.84px;font-size:12px;line-height:14px;color:#000;letter-spacing:-0.281px;"><u>F</u>olien</span>
<div style="left:590px;top:565px;width:219px;height:21px;background:#f5f3f7;border:1px solid #a9a8b2;border-top-color:#8e8d96"></div>
<span class="t" style="left:592.50px;top:568.84px;font-size:12px;line-height:14px;color:#000;letter-spacing:0.052px;">1-6</span>
<div style="left:532px;top:592.8px;width:12px;height:12px;border-radius:50%;border:1px solid #9a9aa2;background:radial-gradient(circle at 45% 40%,#f3f2f5 0,#dcdbdf 55%,#c4c3c9 100%)"></div>
<span class="t" style="left:549.20px;top:592.04px;font-size:12px;line-height:14px;color:#000;letter-spacing:-0.051px;">A<u>u</u>swahl</span>
<div style="left:532px;top:613px;width:12.5px;height:12.5px;border:1px solid #8a8d96;background:linear-gradient(135deg,#d2d1d7,#f1f0f4);box-shadow:inset 0 0 0 1px #f3f2f6"></div>
<span class="t" style="left:549.20px;top:612.64px;font-size:12px;line-height:14px;color:#000;letter-spacing:-0.028px;">Drucken in umgekehrter <u>R</u>eihenfolge</span>
<div style="left:815.7px;top:544px;width:1px;height:84px;background:#a3a1a8"></div>
<span class="t" style="left:823.80px;top:548.34px;font-size:12px;line-height:14px;color:#000;letter-spacing:-0.429px;">E<u>x</u>emplare</span>
<div style="left:884px;top:544px;width:53px;height:20.5px;background:#f5f3f7;border:1px solid #a9a8b2"></div>
<span class="t" style="left:887.00px;top:548.34px;font-size:12px;line-height:14px;color:#000;">1</span>
<div style="left:920.5px;top:545.5px;width:15px;height:9px;border:1px solid #a9a8b2;background:linear-gradient(#f4f3f6,#dddce1)"></div>
<div style="left:920.5px;top:554px;width:15px;height:9px;border:1px solid #a9a8b2;background:linear-gradient(#f4f3f6,#dddce1)"></div>
<svg style="left:925px;top:548px" width="7" height="4"><path d="M0 4 L3.5 0 L7 4Z" fill="#55535a"/></svg>
<svg style="left:925px;top:557px" width="7" height="4"><path d="M0 0 L3.5 4 L7 0Z" fill="#55535a"/></svg>
<div style="left:823.5px;top:585.5px;width:12.5px;height:12.5px;border:1px solid #b9b8c0;background:#f1eff3"></div>
<svg style="left:826px;top:588px" width="9" height="9"><path d="M1 5 L3.5 7.5 L8 1" stroke="#b9b8c0" stroke-width="1.5" fill="none"/></svg>
<span class="t" style="left:840.50px;top:585.04px;font-size:12px;line-height:14px;color:#8d8b92;letter-spacing:-0.300px;"><u>S</u>ortieren</span>
<svg style="left:925px;top:575px" width="18" height="23" viewBox="0 0 18 23"><path d="M0.5 0.5 H12 L17.5 6 V22.5 H0.5Z" fill="#f8f7fa" stroke="#5d5b62"/><path d="M12 0.5 V6 H17.5" fill="none" stroke="#5d5b62"/><text x="10.3" y="19.7" font-family="Liberation Sans,sans-serif" font-size="10" fill="#222">3</text></svg>
<svg style="left:915px;top:581px" width="18" height="23" viewBox="0 0 18 23"><path d="M0.5 0.5 H12 L17.5 6 V22.5 H0.5Z" fill="#f8f7fa" stroke="#5d5b62"/><path d="M12 0.5 V6 H17.5" fill="none" stroke="#5d5b62"/><text x="10.3" y="19.7" font-family="Liberation Sans,sans-serif" font-size="10" fill="#222">2</text></svg>
<svg style="left:905px;top:587px" width="18" height="23" viewBox="0 0 18 23"><path d="M0.5 0.5 H12 L17.5 6 V22.5 H0.5Z" fill="#f8f7fa" stroke="#5d5b62"/><path d="M12 0.5 V6 H17.5" fill="none" stroke="#5d5b62"/><text x="10.3" y="19.7" font-family="Liberation Sans,sans-serif" font-size="10" fill="#222">1</text></svg>
<svg style="left:974px;top:575px" width="18" height="23" viewBox="0 0 18 23"><path d="M0.5 0.5 H12 L17.5 6 V22.5 H0.5Z" fill="#f8f7fa" stroke="#5d5b62"/><path d="M12 0.5 V6 H17.5" fill="none" stroke="#5d5b62"/><text x="10.3" y="19.7" font-family="Liberation Sans,sans-serif" font-size="10" fill="#222">3</text></svg>
<svg style="left:964px;top:581px" width="18" height="23" viewBox="0 0 18 23"><path d="M0.5 0.5 H12 L17.5 6 V22.5 H0.5Z" fill="#f8f7fa" stroke="#5d5b62"/><path d="M12 0.5 V6 H17.5" fill="none" stroke="#5d5b62"/><text x="10.3" y="19.7" font-family="Liberation Sans,sans-serif" font-size="10" fill="#222">2</text></svg>
<svg style="left:954px;top:587px" width="18" height="23" viewBox="0 0 18 23"><path d="M0.5 0.5 H12 L17.5 6 V22.5 H0.5Z" fill="#f8f7fa" stroke="#5d5b62"/><path d="M12 0.5 V6 H17.5" fill="none" stroke="#5d5b62"/><text x="10.3" y="19.7" font-family="Liberation Sans,sans-serif" font-size="10" fill="#222">1</text></svg>
<span class="t" style="left:526.20px;top:635.04px;font-size:12px;line-height:14px;color:#000;letter-spacing:-0.241px;">Drucken</span>
<div style="left:575px;top:641px;width:429px;height:1px;background:#a3a1a8"></div>
<span class="t" style="left:532.50px;top:658.84px;font-size:12px;line-height:14px;color:#000;letter-spacing:0.037px;">Doku<u>m</u>ent</span>
<span class="t" style="left:532.50px;top:687.04px;font-size:12px;line-height:14px;color:#000;letter-spacing:-0.128px;">Folien <u>p</u>ro Seite</span>
<div style="left:600px;top:683.5px;width:90px;height:22px;background:#f5f3f7;border:1px solid #b5b3bb"></div>
<div style="left:675px;top:685px;width:14px;height:19px;border-left:1px solid #c5c3cb"></div>
<svg style="left:679px;top:693px" width="7" height="4"><path d="M0 0 L3.5 4 L7 0Z" fill="#b5b3ba"/></svg>
<span class="t" style="left:698.80px;top:687.04px;font-size:12px;line-height:14px;color:#000;letter-spacing:-0.142px;">Reihenfolg<u>e</u></span>
<div style="left:768px;top:683.5px;width:234px;height:22px;background:#f5f3f7;border:1px solid #a9a8b2"></div>
<div style="left:984.5px;top:685px;width:16px;height:19px;border-left:1px solid #c5c3cb"></div>
<svg style="left:989px;top:693px" width="7" height="4"><path d="M0 0 L3.5 4 L7 0Z" fill="#b5b3ba"/></svg>
<span class="t" style="left:770.80px;top:687.64px;font-size:12px;line-height:14px;color:#908e95;letter-spacing:-0.065px;">Von links nach rechts, dann nach unten</span>
<div style="left:322px;top:733px;width:698px;height:1px;background:#a3a1a8"></div>
<div style="left:329px;top:748.5px;width:92px;height:25.5px;border:1px solid #8a8890;border-radius:3px;background:linear-gradient(#f6f5f8 0,#f0eff3 48%,#e0dfe4 52%,#d6d5da 100%);box-shadow:inset 0 0 0 1px #fbfafc;"></div>
<span class="t" style="left:362.50px;top:754.34px;font-size:12px;line-height:14px;color:#000;letter-spacing:0.197px;"><u>H</u>ilfe</span>
<div style="left:820px;top:748px;width:92px;height:26px;border:1px solid #4f9cc4;border-radius:3px;background:linear-gradient(#f6f5f8 0,#f0eff3 48%,#e0dfe4 52%,#d6d5da 100%);box-shadow:inset 0 0 0 1.6px #a4dcf4;"></div>
<span class="t" style="left:843.80px;top:754.34px;font-size:12px;line-height:14px;color:#000;letter-spacing:-0.070px;"><u>D</u>rucken</span>
<div style="left:920px;top:748px;width:92px;height:26px;border:1px solid #8a8890;border-radius:3px;background:linear-gradient(#f6f5f8 0,#f0eff3 48%,#e0dfe4 52%,#d6d5da 100%);box-shadow:inset 0 0 0 1px #fbfafc;"></div>
<span class="t" style="left:937.00px;top:754.34px;font-size:12px;line-height:14px;color:#000;letter-spacing:-0.005px;"><u>A</u>bbrechen</span>
<div style="left:595.5px;top:655.5px;width:80.5px;height:22.5px;background:#f5f3f7;border:1px solid #3c5a7a"></div>
<div style="left:597px;top:657px;width:61.5px;height:19.5px;background:#3399ff;outline:1px dotted #1a2a40;outline-offset:-1px"></div>
<span class="t" style="left:598.00px;top:659.64px;font-size:12px;line-height:14px;color:#e6f2ff;letter-spacing:-0.281px;">Folien</span>
<div style="left:659px;top:657px;width:16px;height:19.5px;border:1px solid #2c6fae;background:linear-gradient(#e8f4fc 0,#c4e0f4 45%,#9ccdf0 50%,#7fbde8 100%)"></div>
<svg style="left:663px;top:665px" width="8" height="5"><path d="M0 0 L4 5 L8 0Z" fill="#000"/></svg>
<div style="left:595.5px;top:677px;width:80.5px;height:65.5px;background:#f5f3f7;border:1px solid #000"></div>
<div style="left:596.5px;top:694px;width:78.5px;height:16px;background:#3399ff"></div>
<span class="t" style="left:597.50px;top:678.84px;font-size:12px;line-height:14px;color:#000;letter-spacing:-0.281px;">Folien</span>
<span class="t" style="left:597.50px;top:694.84px;font-size:12px;line-height:14px;color:#d7ecff;letter-spacing:-0.188px;">Handzettel</span>
<span class="t" style="left:597.50px;top:710.84px;font-size:12px;line-height:14px;color:#000;letter-spacing:-0.069px;">Notiz</span>
<span class="t" style="left:597.50px;top:726.84px;font-size:12px;line-height:14px;color:#000;letter-spacing:-0.172px;">Gliederung</span>
<svg style="left:667px;top:706px" width="29" height="27" viewBox="0 0 29 27"><path d="M3.6 3.4 L24 11 L13 13.2 L9.6 22.5Z" fill="#fdfdfe" stroke="#0b294d" stroke-width="2" stroke-linejoin="miter"/></svg>
<div style="left:0px;top:0px;width:1101px;height:3px;background:linear-gradient(#3b8143 0,#3b8143 2px,rgba(59,129,67,.55) 2px,rgba(59,129,67,.55) 3px)"></div>
<div style="left:0px;top:810px;width:1101px;height:3px;background:#3b8143"></div>
<div style="left:0px;top:0px;width:3px;height:813px;background:#3b8143"></div>
<div style="left:1098px;top:0px;width:3px;height:813px;background:linear-gradient(90deg,rgba(59,129,67,.6) 0,rgba(59,129,67,.6) 1px,#3b8143 1px,#3b8143 3px)"></div>
</div>
</body>
</html>
